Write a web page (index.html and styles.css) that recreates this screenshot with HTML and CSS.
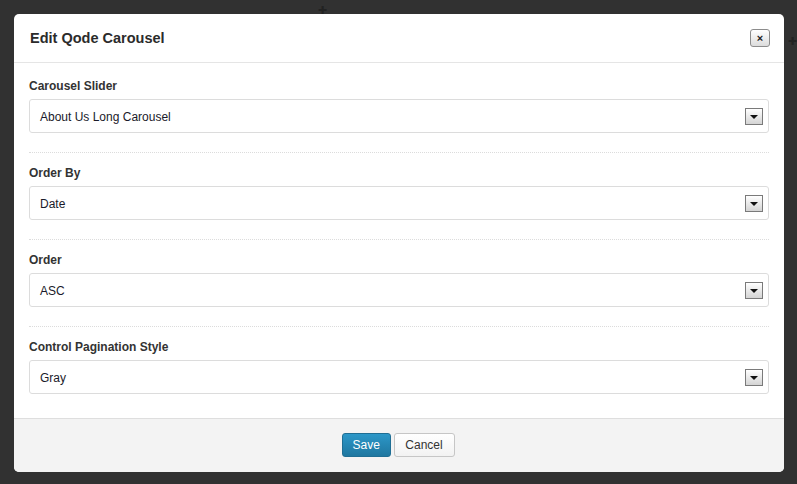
FILE: index.html
```html
<!DOCTYPE html>
<html>
<head>
<meta charset="utf-8">
<link rel="stylesheet" href="styles.css">
</head>
<body>
<div class="backdrop">
  <span class="mark mark-a">✚</span>
  <span class="mark mark-b">✚</span>
  <div class="dialog">
    <div class="dialog-header">
      <h1 class="dialog-title">Edit Qode Carousel</h1>
      <button class="close-btn">×</button>
    </div>
    <div class="dialog-body">
      <div class="field">
        <label class="field-label">Carousel Slider</label>
        <div class="select"><span class="select-value">About Us Long Carousel</span><span class="select-arrow"></span></div>
      </div>
      <div class="field">
        <label class="field-label">Order By</label>
        <div class="select"><span class="select-value">Date</span><span class="select-arrow"></span></div>
      </div>
      <div class="field">
        <label class="field-label">Order</label>
        <div class="select"><span class="select-value">ASC</span><span class="select-arrow"></span></div>
      </div>
      <div class="field field-last">
        <label class="field-label">Control Pagination Style</label>
        <div class="select"><span class="select-value">Gray</span><span class="select-arrow"></span></div>
      </div>
    </div>
    <div class="dialog-footer">
      <button class="btn btn-primary">Save</button>
      <button class="btn btn-default">Cancel</button>
    </div>
  </div>
</div>
</body>
</html>
```

FILE: styles.css
```css
* { box-sizing: border-box; }
html, body { margin: 0; padding: 0; }
body {
  width: 797px;
  height: 484px;
  overflow: hidden;
  background: #313131;
  font-family: "Liberation Sans", Arial, sans-serif;
  color: #333;
}
.backdrop {
  position: relative;
  padding: 14px 13px 12px 14px;
  height: 484px;
}
.mark {
  position: absolute;
  color: #222;
  font-size: 11px;
  line-height: 11px;
}
.mark-a { left: 318px; top: 5px; }
.mark-b { left: 788px; top: 36px; }
.dialog {
  position: relative;
  width: 770px;
  height: 458px;
  background: #fff;
  border-radius: 5px;
  overflow: hidden;
  display: flex;
  flex-direction: column;
}
.dialog-header {
  height: 49px;
  border-bottom: 1px solid #e5e5e5;
  display: flex;
  align-items: center;
  justify-content: space-between;
  padding: 0 14px 0 16px;
}
.dialog-title {
  margin: 0;
  font-size: 14.5px;
  font-weight: bold;
  color: #2b2b2b;
  line-height: 18px;
}
.close-btn {
  width: 20px;
  height: 18px;
  padding: 0;
  border: 1px solid #8c8c8c;
  border-radius: 3px;
  background: linear-gradient(#ffffff, #dcdcdc);
  font-family: "Liberation Sans", Arial, sans-serif;
  font-size: 11px;
  line-height: 14px;
  color: #222;
  font-weight: bold;
}
.dialog-body {
  flex: 1;
  padding: 3px 15px 0 15px;
}
.field {
  padding: 13px 0 19px;
  border-bottom: 1px dotted #dcdcdc;
}
.field-last { border-bottom: none; }
.field-label {
  display: block;
  font-size: 12px;
  font-weight: bold;
  line-height: 14px;
  color: #333;
  margin-bottom: 6px;
}
.select {
  height: 34px;
  border: 1px solid #dcdcdc;
  border-radius: 3px;
  display: flex;
  align-items: center;
  justify-content: space-between;
  padding: 1px 5px 0 10px;
}
.select-value {
  font-size: 12px;
  color: #1a1a2a;
}
.select-arrow {
  width: 18px;
  height: 17px;
  border: 1px solid #7a7a7a;
  background: linear-gradient(#ffffff, #d4d4d4);
  position: relative;
}
.select-arrow::after {
  content: "";
  position: absolute;
  left: 4px;
  top: 6px;
  border-left: 4px solid transparent;
  border-right: 4px solid transparent;
  border-top: 4px solid #111;
}
.dialog-footer {
  height: 54px;
  background: #f3f3f3;
  border-top: 1px solid #dedede;
  display: flex;
  justify-content: center;
  align-items: flex-start;
  gap: 3px;
  padding: 14px 2px 0 0;
}
.btn {
  height: 24px;
  font-family: "Liberation Sans", Arial, sans-serif;
  font-size: 12px;
  border-radius: 3px;
  padding: 0 10px;
  line-height: 22px;
}
.btn-primary {
  width: 49px;
  background: linear-gradient(#2c97c8, #1f77a0);
  border: 1px solid #1f6e94;
  color: #fff;
}
.btn-default {
  width: 61px;
  background: linear-gradient(#ffffff, #f2f2f2);
  border: 1px solid #c6c6c6;
  color: #333;
}
```
